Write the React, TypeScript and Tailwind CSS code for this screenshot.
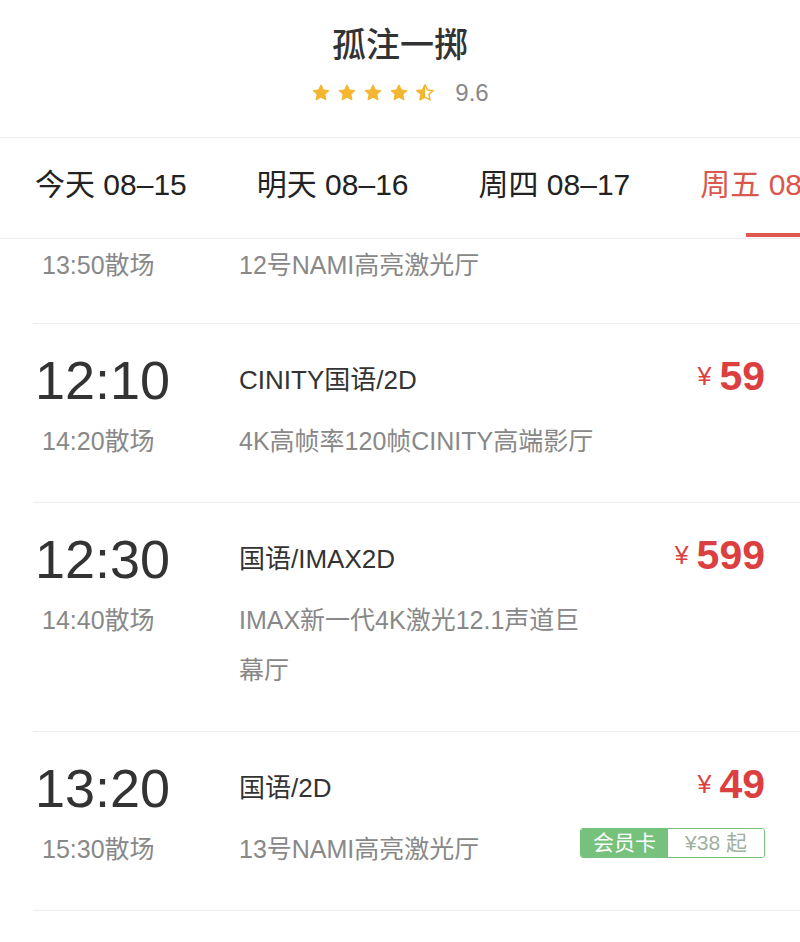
import React from "react";

const font = { fontFamily: '"Liberation Sans", "Noto Sans CJK SC", sans-serif' };

const STAR = "M12 2.2l2.95 6.1 6.7.8-4.95 4.6 1.3 6.6L12 17l-6 3.3 1.3-6.6L2.35 9.1l6.7-.8L12 2.2z";

function Star({ half = false, id }: { half?: boolean; id: string }) {
  return (
    <svg width="20" height="20" viewBox="0 0 24 24">
      {half ? (
        <>
          <defs>
            <clipPath id={id}>
              <rect x="0" y="0" width="12" height="24" />
            </clipPath>
          </defs>
          <path d={STAR} fill="none" stroke="#f3b631" strokeWidth="1.8" strokeLinejoin="round" />
          <path d={STAR} fill="#f3b631" clipPath={`url(#${id})`} />
        </>
      ) : (
        <path d={STAR} fill="#f3b631" stroke="#f3b631" strokeWidth="1.2" strokeLinejoin="round" />
      )}
    </svg>
  );
}

type Show = {
  start: string;
  end: string;
  lang: string;
  hall: string;
  price: string;
  member?: string;
};

const shows: Show[] = [
  { start: "12:10", end: "14:20散场", lang: "CINITY国语/2D", hall: "4K高帧率120帧CINITY高端影厅", price: "59" },
  { start: "12:30", end: "14:40散场", lang: "国语/IMAX2D", hall: "IMAX新一代4K激光12.1声道巨幕厅", price: "599" },
  { start: "13:20", end: "15:30散场", lang: "国语/2D", hall: "13号NAMI高亮激光厅", price: "49", member: "38" },
];

const tabs = ["今天 08–15", "明天 08–16", "周四 08–17", "周五 08–18"];

function Row({ s }: { s: Show }) {
  return (
    <div className="flex border-b border-[#ececec] pt-[20px] pb-[36px]">
      <div className="w-[206px] shrink-0 flex flex-col">
        <div className="h-[72px] flex items-center ml-[2px] text-[54px] text-[#333]">{s.start}</div>
        <div className="pl-[9px] text-[25px] leading-[50px] text-[#888]">{s.end}</div>
      </div>
      <div className="flex-1 flex flex-col">
        <div className="h-[72px] flex items-center text-[26px] text-[#333]">{s.lang}</div>
        <div className="max-w-[358px] text-[25px] leading-[50px] text-[#888]">{s.hall}</div>
      </div>
      <div className="shrink-0 pr-[35px] flex flex-col items-end">
        <div className="h-[66px] flex items-center text-[#dc3f3f]">
          <span className="text-[25px] mr-[8px]">¥</span>
          <span className="text-[41px] font-bold">{s.price}</span>
        </div>
        {s.member && (
          <div className="mt-[10px] flex h-[30px] border border-[#76c17b] rounded-[3px] overflow-hidden text-[21px] leading-[28px]">
            <span className="w-[87px] text-center bg-[#76c17b] text-white">会员卡</span>
            <span className="w-[96px] text-center bg-white text-[#9fb09f]">¥38 起</span>
          </div>
        )}
      </div>
    </div>
  );
}

export default function App() {
  return (
    <div className="w-[800px] h-[942px] bg-white overflow-hidden" style={font}>
      <div className="h-[138px] border-b border-[#ececec] flex flex-col items-center pt-[25px]">
        <div className="text-[34px] leading-[40px] font-medium text-[#333]">孤注一掷</div>
        <div className="mt-[14px] h-[28px] flex items-center">
          <div className="flex items-center gap-[6px]">
            <Star id="s1" />
            <Star id="s2" />
            <Star id="s3" />
            <Star id="s4" />
            <Star id="s5" half />
          </div>
          <span className="ml-[20px] text-[24px] text-[#888]">9.6</span>
        </div>
      </div>

      <div className="h-[101px] border-b border-[#ececec] flex gap-[70px] pl-[35px] whitespace-nowrap overflow-hidden">
        {tabs.map((t, i) => (
          <div key={t} className="relative shrink-0 flex items-center pb-[8px]">
            <span className={i === 3 ? "text-[30px] text-[#d9574d]" : "text-[30px] text-[#222]"}>{t}</span>
            {i === 3 && (
              <div className="absolute bottom-[1px] left-[46px] w-[64px] h-[4px] bg-[#e0574d]" />
            )}
          </div>
        ))}
      </div>

      <div className="ml-[33px]">
        <div className="flex border-b border-[#ececec] pt-[1px] pb-[33px]">
          <div className="w-[206px] shrink-0 pl-[9px] text-[25px] leading-[50px] text-[#888]">13:50散场</div>
          <div className="text-[25px] leading-[50px] text-[#888]">12号NAMI高亮激光厅</div>
        </div>
        {shows.map((s) => (
          <Row key={s.start} s={s} />
        ))}
      </div>
    </div>
  );
}
